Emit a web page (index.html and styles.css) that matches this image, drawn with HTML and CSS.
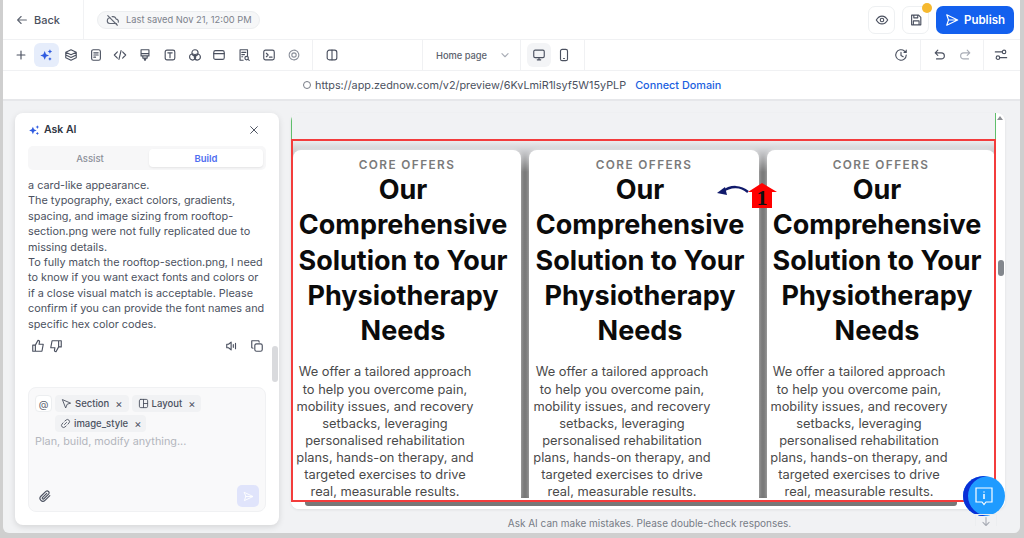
FILE: index.html
```html
<!DOCTYPE html>
<html lang="en">
<head>
<meta charset="utf-8">
<title>Editor</title>
<link rel="stylesheet" href="styles.css">
</head>
<body>
<div class="frame">
  <header class="topbar">
    <a class="back"><svg class="ic" viewBox="0 0 16 16"><path d="M13 8H3M7 4 3 8l4 4"/></svg>Back</a>
    <div class="saved"><svg class="ic" viewBox="0 0 16 16"><path d="M2 3l11 11M5 5.500A3.200 3.200 0 0 0 4.500 12H12M7 4.200A4 4 0 0 1 11.600 7 2.600 2.600 0 0 1 14 10.500"/></svg>Last saved Nov 21, 12:00 PM</div>
    <div class="top-actions">
      <button class="square"><svg class="ic dark" viewBox="0 0 16 16"><path d="M1.500 8S4 3.500 8 3.500 14.500 8 14.500 8 12 12.500 8 12.500 1.500 8 1.500 8Z"/><circle cx="8" cy="8" r="2"/></svg></button>
      <button class="square"><svg class="ic dark" viewBox="0 0 16 16"><path d="M3 2.500h8l2.500 2.500v8.500H3ZM5.500 2.500v3h4.500v-3M5 13.500v-4.500h6.500v4.500"/></svg><span class="dot"></span></button>
      <button class="publish"><svg class="ic white" viewBox="0 0 16 16"><path d="M2 2l12.500 6L2 14l2-6ZM4 8h10"/></svg>Publish</button>
    </div>
  </header>

  <nav class="toolbar">
    <div class="tools">
      <span class="tool"><svg class="ic dark" viewBox="0 0 16 16"><path d="M8 3.500v9M3.500 8h9"/></svg></span>
      <span class="tool on"><svg class="solid" viewBox="0 0 16 16"><path d="M6.500 3.500 8 7l3.500 1.500L8 10l-1.500 3.500L5 10 1.500 8.500 5 7ZM12.500 1.500l.8 1.700 1.700.8-1.700.8-.8 1.700-.8-1.700L10 4l1.700-.8ZM12.500 10.500l.7 1.300 1.300.7-1.300.7-.7 1.300-.7-1.300-1.300-.7 1.300-.7Z"/></svg></span>
      <span class="tool"><svg class="ic dark" viewBox="0 0 16 16"><path d="M8 2l6 2.800-6 2.800-6-2.800ZM2 8l6 2.800L14 8M2 11.200 8 14l6-2.800M2 4.800v6.400M14 4.800v6.400"/></svg></span>
      <span class="tool"><svg class="ic dark" viewBox="0 0 16 16"><rect x="3" y="2" width="10" height="12" rx="2"/><path d="M5.500 5.500h5M5.500 8h5M5.500 10.500h2"/></svg></span>
      <span class="tool"><svg class="ic dark" viewBox="0 0 16 16"><path d="M5 4.500 1.500 8 5 11.500M11 4.500 14.500 8 11 11.500M9.200 3 6.800 13"/></svg></span>
      <span class="tool"><svg class="ic dark" viewBox="0 0 16 16"><path d="M3.500 2h9v7h-9ZM3.500 6.500h9M5.500 9v2.500h5V9M7 11.500 7.500 14h1l.5-2.500"/></svg></span>
      <span class="tool"><svg class="ic dark" viewBox="0 0 16 16"><rect x="2.500" y="2.500" width="11" height="11" rx="2"/><path d="M5.500 5.500h5M8 5.500v5.500"/></svg></span>
      <span class="tool"><svg class="ic dark" viewBox="0 0 16 16"><circle cx="8" cy="5.500" r="3.500"/><circle cx="5.300" cy="10.300" r="3.500"/><circle cx="10.700" cy="10.300" r="3.500"/></svg></span>
      <span class="tool"><svg class="ic dark" viewBox="0 0 16 16"><rect x="2" y="3" width="12" height="10" rx="2"/><path d="M2 6.500h12"/></svg></span>
      <span class="tool"><svg class="ic dark" viewBox="0 0 16 16"><path d="M7 14H3.500V2H12v6.500M5.500 5h4.500M5.500 7.500h3M5.500 10h1"/><circle cx="11" cy="11.500" r="2"/><path d="m12.500 13 1.500 1.200"/></svg></span>
      <span class="tool"><svg class="ic dark" viewBox="0 0 16 16"><rect x="2" y="2.500" width="12" height="11" rx="2"/><path d="M5 6l2 2-2 2M8.500 10.500h3"/></svg></span>
      <span class="tool"><svg class="ic soft" viewBox="0 0 16 16"><circle cx="8" cy="8" r="5.500" stroke-dasharray="2.500 1"/><circle cx="8" cy="8" r="2.500"/></svg></span>
    </div>
    <div class="group split"><svg class="ic dark" viewBox="0 0 16 16"><rect x="2.500" y="2.500" width="11" height="11" rx="2.500"/><path d="M8 2.500v11"/></svg></div>
    <div class="page-select">Home page<svg class="ic faint" viewBox="0 0 16 16"><path d="m4.500 6.500 3.500 3.500 3.500-3.500"/></svg></div>
    <div class="device">
      <span class="dev on"><svg class="ic dark" viewBox="0 0 16 16"><rect x="2" y="2.500" width="12" height="8.500" rx="1.500"/><path d="M6 13.500h4M8 11v2.500"/></svg></span>
      <span class="dev"><svg class="ic dark" viewBox="0 0 16 16"><rect x="4" y="1.500" width="8" height="13" rx="2"/><path d="M7.500 12h1"/></svg></span>
    </div>
    <div class="history"><svg class="ic dark" viewBox="0 0 16 16"><path d="M14 8a6 6 0 1 1-2-4.500L14 5M14 2.500V5h-2.500M8 5v3.500l2.500 1.500"/></svg></div>
    <div class="undo">
      <svg class="ic dark" viewBox="0 0 16 16"><path d="M5.500 2.500 2.500 5.500l3 3M2.500 5.500h7a3.500 3.500 0 0 1 0 7H4"/></svg>
      <svg class="ic faint" viewBox="0 0 16 16"><path d="M10.500 2.500l3 3-3 3M13.500 5.500h-7a3.500 3.500 0 0 0 0 7H12"/></svg>
    </div>
    <div class="tune"><svg class="ic dark" viewBox="0 0 16 16"><circle cx="11.500" cy="4.500" r="2"/><circle cx="4.500" cy="11" r="2"/><path d="M1.500 4.500h8M6.500 11h8"/></svg></div>
  </nav>

  <div class="urlbar">
    <span class="ring"></span><span class="url">https://app.zednow.com/v2/preview/6KvLmiR1lsyf5W15yPLP</span><a class="connect">Connect Domain</a>
  </div>

  <main class="work">
    <aside class="panel">
      <div class="panel-head">
        <svg class="spark" viewBox="0 0 16 16"><path d="M6.500 3.500 8 7l3.500 1.500L8 10l-1.500 3.500L5 10 1.500 8.500 5 7ZM12.500 1.500l.8 1.700 1.700.8-1.700.8-.8 1.700-.8-1.700L10 4l1.700-.8ZM12.500 10.500l.7 1.300 1.300.7-1.300.7-.7 1.300-.7-1.300-1.300-.7 1.300-.7Z"/></svg>
        <span class="ask">Ask AI</span>
        <svg class="ic dark close" viewBox="0 0 16 16"><path d="m3.500 3.500 9 9M12.500 3.500l-9 9"/></svg>
      </div>
      <div class="tabs"><span class="tab">Assist</span><span class="tab active">Build</span></div>
      <div class="msg">
        a card-like appearance.<br>
        The typography, exact colors, gradients,<br>
        spacing, and image sizing from rooftop-<br>
        section.png were not fully replicated due to<br>
        missing details.<br>
        To fully match the rooftop-section.png, I need<br>
        to know if you want exact fonts and colors or<br>
        if a close visual match is acceptable. Please<br>
        confirm if you can provide the font names and<br>
        specific hex color codes.
      </div>
      <div class="reactions">
        <svg class="ic dark" viewBox="0 0 16 16"><path d="M5 7v7H2V7ZM5 7l3-5.500c1.500 0 2 1 1.700 2.200L9.200 6H14l-1.500 8H5"/></svg>
        <svg class="ic dark" viewBox="0 0 16 16"><path d="M11 9V2h3v7ZM11 9l-3 5.500c-1.500 0-2-1-1.700-2.200L6.800 10H2l1.500-8H11"/></svg>
        <span class="grow"></span>
        <svg class="ic dark" viewBox="0 0 16 16"><path d="M2 6v4h2l3 2.500v-9L4 6ZM9.500 6.500v3M12 5v6"/></svg>
        <svg class="ic dark" viewBox="0 0 16 16"><rect x="5.500" y="5.500" width="8.500" height="8.500" rx="2"/><path d="M10.500 3.500 10 2H2v8l1.500.5"/></svg>
      </div>
      <div class="thumb"></div>
      <div class="composer">
        <div class="chips">
          <span class="at">@</span>
          <span class="chip wide"><svg class="ic dark" viewBox="0 0 16 16"><path d="M2.500 2.500 14 7.500 9 9l-2 5Z"/></svg>Section<i>×</i></span>
          <span class="chip wide"><svg class="ic dark" viewBox="0 0 16 16"><rect x="2" y="2" width="12" height="12" rx="2"/><path d="M8 2v12M8 8h6"/></svg>Layout<i>×</i></span>
          <span class="chip chip-link"><svg class="ic dark" viewBox="0 0 16 16"><path d="M6.500 9.500 9.500 6.500M7 4.500 9 2.800a3 3 0 0 1 4.200 4.200L11.500 9M9 11.500 7 13.200A3 3 0 0 1 2.800 9L4.500 7"/></svg>image_style<i>×</i></span>
        </div>
        <div class="placeholder">Plan, build, modify anything...</div>
        <div class="composer-foot">
          <svg class="ic dark clip" viewBox="0 0 16 16"><path d="M13.500 7.500 8 13a3.300 3.300 0 0 1-4.700-4.700L9 2.700a2.200 2.200 0 0 1 3.100 3.100L6.500 11.400a1.100 1.100 0 0 1-1.500-1.500l5-5"/></svg>
          <span class="send"><svg class="ic white" viewBox="0 0 16 16"><path d="M2 2l12.500 6L2 14l2-6ZM4 8h10"/></svg></span>
        </div>
      </div>
    </aside>

    <section class="stage">
      <div class="preview">
        <div class="preview-top"><span class="arrow-up"></span></div>
        <div class="view">
          <div class="cards">
            <article class="card">
              <p class="eyebrow">CORE OFFERS</p>
              <h2>Our<br>Comprehensive<br>Solution to Your<br>Physiotherapy<br>Needs</h2>
              <p class="copy">We offer a tailored approach<br>to help you overcome pain,<br>mobility issues, and recovery<br>setbacks, leveraging<br>personalised rehabilitation<br>plans, hands-on therapy, and<br>targeted exercises to drive<br>real, measurable results.</p>
            </article>
            <article class="card">
              <p class="eyebrow">CORE OFFERS</p>
              <h2>Our<br>Comprehensive<br>Solution to Your<br>Physiotherapy<br>Needs</h2>
              <p class="copy">We offer a tailored approach<br>to help you overcome pain,<br>mobility issues, and recovery<br>setbacks, leveraging<br>personalised rehabilitation<br>plans, hands-on therapy, and<br>targeted exercises to drive<br>real, measurable results.</p>
            </article>
            <article class="card">
              <p class="eyebrow">CORE OFFERS</p>
              <h2>Our<br>Comprehensive<br>Solution to Your<br>Physiotherapy<br>Needs</h2>
              <p class="copy">We offer a tailored approach<br>to help you overcome pain,<br>mobility issues, and recovery<br>setbacks, leveraging<br>personalised rehabilitation<br>plans, hands-on therapy, and<br>targeted exercises to drive<br>real, measurable results.</p>
            </article>
          </div>
          <div class="vscroll"><span class="vthumb"></span></div>
        </div>
        <div class="hscroll"><span class="hthumb"></span></div>
      </div>
      <p class="disclaimer">Ask AI can make mistakes. Please double-check responses.</p>
    </section>
  </main>

  <div class="redbox"></div>
  <div class="marker">
    <svg class="marker-art" viewBox="0 0 64 26"><path d="M34 9C27 3 17 2 8 9" fill="none" stroke="#101a6b" stroke-width="2.500"/><path d="M3 10 11 4 13 12Z" fill="#101a6b"/><path d="M34 9 48 0 63 9H58V25H38V9Z" fill="#f00"/></svg>
    <span class="marker-num">1</span>
  </div>
  <div class="chat">
    <svg viewBox="0 0 24 24"><path d="M4 4h16v14h-6l-2 2.500L10 18H4Z" fill="none" stroke="#fff" stroke-width="1.200"/><path d="M12 10v5M12 7.500v1" stroke="#fff" stroke-width="1.500"/></svg>
  </div>
  <div class="down"><svg class="ic faint" viewBox="0 0 16 16"><path d="M8 3v9M4.500 8.500 8 12l3.500-3.500"/></svg></div>
</div>
</body>
</html>
```
FILE: styles.css
```css
* { box-sizing: border-box; }
html, body { margin: 0; height: 538px; overflow: hidden; }
body { background: #cfcfcf; font-family: Inter, "Liberation Sans", sans-serif; color: #2f3542; }
p, h2 { margin: 0; }
button { font: inherit; border: 0; padding: 0; }

.frame { position: relative; margin-left: 3px; width: 1017px; height: 533px; background: #f1f2f4; border-radius: 0 0 6px 6px; display: flex; flex-direction: column; overflow: hidden; }

.ic { width: 14px; height: 14px; fill: none; stroke: #626875; stroke-width: 1.300; stroke-linecap: round; stroke-linejoin: round; flex: none; }
.ic.dark { stroke: #4b5160; }
.ic.soft { stroke: #8b909b; }
.ic.faint { stroke: #a9adb6; }
.ic.white { stroke: #fff; }
.solid { width: 14px; height: 14px; fill: #2f5be0; }

.topbar { height: 39px; background: #fff; display: flex; align-items: center; }
.back { width: 81px; height: 39px; padding-left: 12px; border-right: 1px solid #f1f2f4; display: flex; align-items: center; gap: 5px; font-size: 11px; font-weight: 500; color: #4b5160; }
.saved { margin-left: 13px; width: 163px; height: 18px; border-radius: 9px; background: #f6f7f8; border: 1px solid #eceef0; display: flex; align-items: center; gap: 6px; padding-left: 8px; font-size: 9.300px; color: #7d828c; white-space: nowrap; }
.top-actions { margin-left: auto; margin-right: 6px; display: flex; gap: 7px; align-items: center; }
.square { position: relative; width: 27px; height: 28px; background: #fff; border: 1px solid #eef0f2; border-radius: 7px; display: flex; align-items: center; justify-content: center; }
.dot { position: absolute; top: -4px; right: -4px; width: 10px; height: 10px; border-radius: 50%; background: #f6b92f; }
.publish { width: 78px; height: 28px; background: #1360ee; color: #fff; border-radius: 7px; font-size: 11.500px; font-weight: 600; display: flex; align-items: center; justify-content: center; gap: 5px; }

.toolbar { height: 32px; background: #fff; border-top: 1px solid #f0f1f3; border-bottom: 1px solid #f0f1f3; display: flex; align-items: stretch; }
.tools { display: flex; align-items: center; padding-left: 6px; width: 310px; border-right: 1px solid #f0f1f3; }
.tool { width: 24.750px; height: 24px; display: flex; align-items: center; justify-content: center; border-radius: 6px; }
.tool.on { background: #e6edfb; }
.group { display: flex; align-items: center; justify-content: center; }
.split { width: 110px; justify-content: flex-start; padding-left: 12px; border-right: 1px solid #f0f1f3; }
.page-select { width: 98px; display: flex; align-items: center; padding-left: 13px; gap: 11px; font-size: 9.300px; font-weight: 500; color: #5b616d; border-right: 1px solid #f0f1f3; white-space: nowrap; }
.device { width: 64px; display: flex; align-items: center; padding-left: 6px; gap: 1px; border-right: 1px solid #f0f1f3; }
.dev { width: 24px; height: 24px; border-radius: 6px; display: flex; align-items: center; justify-content: center; }
.dev.on { background: #f3f4f6; }
.history { width: 336px; display: flex; align-items: center; justify-content: flex-end; padding-right: 12px; border-right: 1px solid #f0f1f3; }
.undo { width: 63px; display: flex; align-items: center; gap: 11px; padding-left: 12px; border-right: 1px solid #f0f1f3; }
.tune { flex: 1; display: flex; align-items: center; padding-left: 10px; }

.urlbar { height: 30px; background: #fff; border-bottom: 2px solid #e6e7ea; display: flex; align-items: center; padding-left: 300px; font-size: 10.850px; color: #4b5160; white-space: nowrap; }
.ring { width: 8px; height: 8px; border: 1px solid #777c86; border-radius: 50%; margin-right: 4px; }
.connect { margin-left: 9px; color: #1a5fe0; font-weight: 500; }

.work { flex: 1; display: flex; padding: 12px 0 0 12px; min-height: 0; }
.panel { position: relative; width: 264px; height: 412px; background: #fff; border-radius: 8px; box-shadow: 0 2px 6px rgba(0,0,0,.12); padding: 0 13px; display: flex; flex-direction: column; }
.panel-head { height: 33px; flex: none; display: flex; align-items: center; gap: 4px; }
.spark { width: 12px; height: 12px; fill: #2f5be0; }
.ask { font-size: 10.500px; font-weight: 600; color: #2f3542; }
.close { margin-left: auto; margin-right: 6px; width: 12px; height: 12px; }
.tabs { height: 24px; flex: none; background: #f7f7f8; border-radius: 5px; padding: 3px; display: flex; align-items: stretch; font-size: 9.500px; font-weight: 500; color: #8b8f98; }
.tab { flex: 1; display: flex; align-items: center; justify-content: center; border-radius: 4px; }
.tab.active { flex: 0 0 114px; background: #fff; color: #4f6ef0; font-weight: 600; box-shadow: 0 1px 2px rgba(0,0,0,.08); }
.msg { margin-top: 8px; font-size: 10.850px; line-height: 15.400px; color: #4b5160; white-space: nowrap; }
.reactions { margin-top: 5px; height: 18px; flex: none; display: flex; align-items: center; gap: 4px; padding: 0 2px 0 3px; width: 238px; }
.grow { flex: 1; }
.reactions .ic:nth-of-type(3) { margin-right: 7px; }
.thumb { position: absolute; right: 1px; top: 233px; width: 6px; height: 36px; border-radius: 3px; background: #d9dadd; }
.composer { margin-top: 32px; width: 238px; height: 125px; flex: none; background: #f9f9fa; border: 1px solid #f0f1f3; border-radius: 8px; padding: 7px 6px 4px 6px; display: flex; flex-direction: column; }
.chips { display: flex; flex-wrap: wrap; gap: 3px; }
.at { width: 17px; height: 17px; background: #fff; border: 1px solid #eceef0; border-radius: 4px; font-size: 10px; color: #5b616d; display: flex; align-items: center; justify-content: center; }
.chip { height: 17px; padding: 0 5px; background: #f1f2f4; border-radius: 4px; display: flex; align-items: center; gap: 3px; font-size: 9.500px; font-weight: 500; color: #4b5160; }
.chip.wide { padding: 0 6px; }
.chip .ic { width: 11px; height: 11px; }
.chip i { font-style: normal; margin-left: 3px; font-size: 11px; font-weight: 400; }
.chip-link { margin-left: 20px; }
.placeholder { margin-top: 2px; font-size: 10.850px; color: #b3b6bd; }
.composer-foot { margin-top: auto; display: flex; align-items: center; justify-content: space-between; padding-left: 3px; }
.send { width: 22px; height: 22px; background: #e0e4fb; border-radius: 5px; display: flex; align-items: center; justify-content: center; }
.send .ic { width: 11px; height: 11px; }

.stage { margin-left: 12px; width: 714px; display: flex; flex-direction: column; }
.preview { height: 396px; flex: none; border-radius: 8px; background: #fff; overflow: hidden; display: flex; flex-direction: column; box-shadow: 0 1px 3px rgba(0,0,0,.08); }
.preview-top { height: 27px; flex: none; background: #f1f2f4; border-left: 1px solid #5fbf6b; position: relative; margin-right: 9px; border-right: 1px solid #5fbf6b; }
.arrow-up { position: absolute; right: -8px; top: 3px; border: 3px solid transparent; border-bottom: 4px solid #8d8f94; border-top: 0; }
.view { flex: 1; display: flex; min-height: 0; }
.cards { position: relative; flex: none; width: 704px; background: linear-gradient(#eeeff1 0, #cfd0d3 10px, #777 32px, #767676); display: flex; gap: 8px; padding-left: 2px; }
.card { position: relative; flex: 0 0 228px; min-width: 0; margin-top: 10px; background: #fff; border-radius: 8px 8px 0 0; text-align: center; box-shadow: 0 0 4px rgba(255,255,255,.5); }
.card:nth-child(2) { flex-basis: 230px; }
.eyebrow { padding-top: 8px; font-size: 11.800px; line-height: 14px; font-weight: 600; letter-spacing: 1.400px; color: #7a7a7a; }
h2 { padding-right: 8px; font-size: 27px; line-height: 35.300px; font-weight: 700; color: #0b0b0b; white-space: nowrap; }
.copy { margin-top: 15px; padding-right: 44px; font-size: 12.850px; line-height: 17.100px; color: #4a4a4a; white-space: nowrap; }
.vscroll { flex: 1; position: relative; background: #fff; border-left: 1px solid #5fbf6b; }
.vthumb { position: absolute; left: 2px; top: 120px; width: 6px; height: 16px; border-radius: 3px; background: #83878d; }
.hscroll { height: 11px; flex: none; background: #fff; padding: 2px 48px 0 14px; }
.hthumb { display: block; height: 6px; background: #777; border-radius: 0 0 3px 3px; }
.disclaimer { margin-top: 8px; padding-left: 3px; text-align: center; font-size: 10px; color: #777c86; }

.redbox { position: absolute; left: 288px; top: 139px; width: 705px; height: 363px; border: 2px solid #f33c3c; pointer-events: none; }
.marker { position: absolute; left: 711px; top: 183px; width: 64px; height: 26px; }
.marker-art { width: 64px; height: 26px; display: block; }
.marker-num { position: absolute; left: 41px; top: 2px; width: 14px; text-align: center; font: 700 22px/26px "Liberation Serif", serif; color: #111; }
.chat { position: absolute; left: 960px; top: 476px; width: 42px; height: 40px; border-radius: 50%; background: #1f9bff; box-shadow: inset 5px 0 0 #0a2fd6; display: flex; align-items: center; justify-content: center; }
.chat svg { width: 24px; height: 24px; }
.down { position: absolute; left: 972px; top: 514px; width: 22px; height: 12px; display: flex; justify-content: center; border: 1px solid #eceef0; border-bottom: 0; }
```
